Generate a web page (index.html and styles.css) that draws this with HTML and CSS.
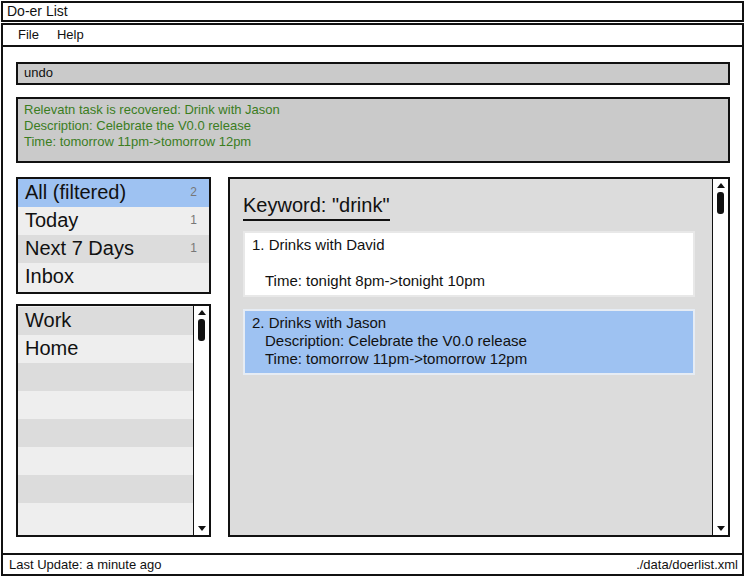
FILE: index.html
```html
<!DOCTYPE html>
<html>
<head>
<meta charset="utf-8">
<link rel="stylesheet" href="styles.css">
<title>Do-er List</title>
</head>
<body>
<div class="window">
  <div class="titlebar">Do-er List</div>
  <div class="menubar"><span>File</span><span>Help</span></div>
  <div class="main">
    <div class="command">undo</div>
    <div class="feedback">
      <div>Relevatn task is recovered: Drink with Jason</div>
      <div>Description: Celebrate the V0.0 release</div>
      <div>Time: tomorrow 11pm-&gt;tomorrow 12pm</div>
    </div>
    <div class="columns">
      <div class="left">
        <div class="filters">
          <div class="row sel"><span>All (filtered)</span><span class="count">2</span></div>
          <div class="row light"><span>Today</span><span class="count">1</span></div>
          <div class="row dark"><span>Next 7 Days</span><span class="count">1</span></div>
          <div class="row light"><span>Inbox</span></div>
        </div>
        <div class="tags">
          <div class="tag-rows">
            <div class="row dark"><span>Work</span></div>
            <div class="row light"><span>Home</span></div>
            <div class="row dark"></div>
            <div class="row light"></div>
            <div class="row dark"></div>
            <div class="row light"></div>
            <div class="row dark"></div>
            <div class="row light"></div>
          </div>
          <div class="scrollbar">
            <div class="arrow up"></div>
            <div class="thumb"></div>
            <div class="track"></div>
            <div class="arrow down"></div>
          </div>
        </div>
      </div>
      <div class="panel">
        <div class="results">
          <div class="heading">Keyword: "drink"</div>
          <div class="card">
            <div>1. Drinks with David</div>
            <div class="indent">&nbsp;</div>
            <div class="indent">Time: tonight 8pm-&gt;tonight 10pm</div>
          </div>
          <div class="card selected">
            <div>2. Drinks with Jason</div>
            <div class="indent">Description: Celebrate the V0.0 release</div>
            <div class="indent">Time: tomorrow 11pm-&gt;tomorrow 12pm</div>
          </div>
        </div>
        <div class="scrollbar">
          <div class="arrow up"></div>
          <div class="thumb"></div>
          <div class="track"></div>
          <div class="arrow down"></div>
        </div>
      </div>
    </div>
  </div>
  <div class="statusbar"><span>Last Update: a minute ago</span><span>./data/doerlist.xml</span></div>
</div>
</body>
</html>
```

FILE: styles.css
```css
html, body {
  margin: 0;
  padding: 0;
  background: #fff;
}
body {
  font-family: "Liberation Sans", Arial, sans-serif;
  color: #111;
  width: 746px;
  height: 577px;
  overflow: hidden;
}
.window {
  box-sizing: border-box;
  width: 746px;
  height: 577px;
  padding: 1px 2px 1px 1px;
  display: flex;
  flex-direction: column;
}
.titlebar {
  box-sizing: border-box;
  height: 21px;
  border: 2px solid #111;
  font-size: 14px;
  line-height: 17px;
  padding-left: 4px;
}
.menubar {
  box-sizing: border-box;
  height: 24px;
  margin-top: 1px;
  border: 2px solid #111;
  font-size: 13px;
  line-height: 20px;
  padding-left: 15px;
  display: flex;
  gap: 18px;
}
.main {
  flex: 1;
  box-sizing: border-box;
  border-left: 2px solid #111;
  border-right: 2px solid #111;
  padding: 15px 12px 16px 13px;
  display: flex;
  flex-direction: column;
}
.command {
  box-sizing: border-box;
  height: 23px;
  background: #cacaca;
  border: 2px solid #111;
  font-size: 13px;
  line-height: 18px;
  padding-left: 6px;
}
.feedback {
  box-sizing: border-box;
  height: 66px;
  margin-top: 12px;
  background: #cacaca;
  border: 2px solid #111;
  color: #3b7d1e;
  font-size: 13px;
  line-height: 16px;
  padding: 3px 6px;
}
.columns {
  flex: 1;
  margin-top: 14px;
  display: flex;
  gap: 17px;
}
.left {
  width: 195px;
  display: flex;
  flex-direction: column;
  gap: 10px;
}
.filters {
  box-sizing: border-box;
  border: 2px solid #111;
  background: #eee;
  padding-bottom: 1px;
}
.row {
  height: 28px;
  line-height: 26px;
  font-size: 20px;
  padding: 0 12px 0 7px;
  display: flex;
  justify-content: space-between;
}
.row.sel { background: #9ec2f2; }
.row.light { background: #eeeeee; }
.row.dark { background: #dcdcdc; }
.count {
  font-size: 12px;
  color: #777;
}
.tags {
  flex: 1;
  box-sizing: border-box;
  border: 2px solid #111;
  background: #eee;
  display: flex;
  overflow: hidden;
}
.tag-rows {
  flex: 1;
  padding-top: 1px;
}
.scrollbar {
  width: 13px;
  border-left: 1px solid #111;
  background: #fff;
  display: flex;
  flex-direction: column;
  align-items: center;
  padding: 2px 1px;
}
.arrow {
  width: 0;
  height: 0;
  border-left: 4px solid transparent;
  border-right: 4px solid transparent;
  margin: 2px 0;
}
.arrow.up {
  border-bottom: 5px solid #111;
}
.arrow.down {
  border-top: 5px solid #111;
}
.thumb {
  width: 7px;
  height: 22px;
  background: #111;
  border-radius: 3px;
  margin-top: 2px;
}
.track { flex: 1; }
.panel {
  flex: 1;
  box-sizing: border-box;
  border: 2px solid #111;
  background: #dcdcdc;
  display: flex;
}
.results {
  flex: 1;
  padding: 15px 17px 0 13px;
}
.heading {
  display: inline-block;
  font-size: 20px;
  line-height: 22px;
  padding: 0 1px 3px 0;
  border-bottom: 2px solid #111;
}
.card {
  box-sizing: border-box;
  background: #fff;
  border: 2px solid #e8e8e8;
  font-size: 15px;
  line-height: 18px;
  padding: 3px 8px 5px 7px;
  margin-top: 10px;
}
.card.selected {
  background: #9ec2f2;
  border-color: #e6ecf4;
  margin-top: 12px;
}
.indent {
  padding-left: 13px;
}
.statusbar {
  box-sizing: border-box;
  height: 23px;
  border: 2px solid #111;
  font-size: 13px;
  line-height: 20px;
  padding: 0 4px 0 6px;
  display: flex;
  justify-content: space-between;
}
```
